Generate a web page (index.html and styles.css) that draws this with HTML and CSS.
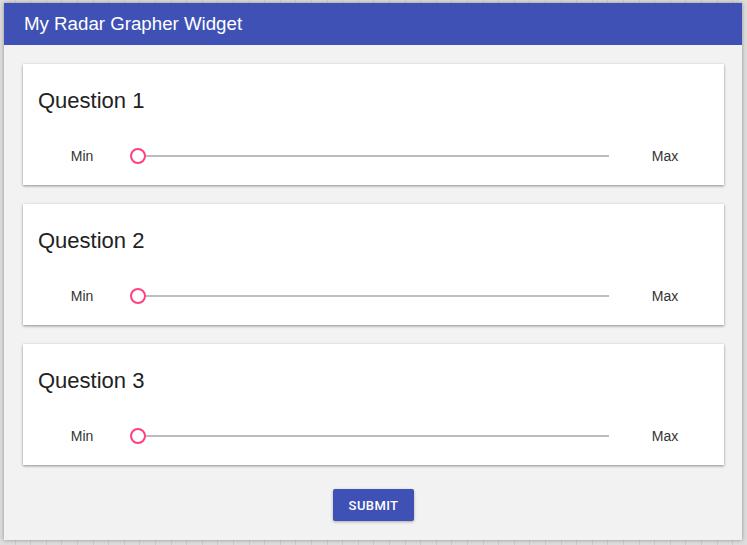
FILE: index.html
```html
<!DOCTYPE html>
<html>
<head>
<meta charset="utf-8">
<link rel="stylesheet" href="styles.css">
</head>
<body>
<div class="window">
  <header class="appbar">My Radar Grapher Widget</header>
  <main class="content">
    <section class="card">
      <h2 class="title">Question 1</h2>
      <div class="row">
        <span class="label">Min</span>
        <div class="slider"><div class="track"></div><div class="thumb"></div></div>
        <span class="label">Max</span>
      </div>
    </section>
    <section class="card">
      <h2 class="title">Question 2</h2>
      <div class="row">
        <span class="label">Min</span>
        <div class="slider"><div class="track"></div><div class="thumb"></div></div>
        <span class="label">Max</span>
      </div>
    </section>
    <section class="card">
      <h2 class="title">Question 3</h2>
      <div class="row">
        <span class="label">Min</span>
        <div class="slider"><div class="track"></div><div class="thumb"></div></div>
        <span class="label">Max</span>
      </div>
    </section>
    <div class="actions"><button class="submit">SUBMIT</button></div>
  </main>
</div>
</body>
</html>
```
FILE: styles.css
```css
html, body { margin: 0; padding: 0; }
body {
  width: 747px;
  height: 545px;
  overflow: hidden;
  font-family: "Liberation Sans", Arial, sans-serif;
  background-color: #dddddd;
  background-image: repeating-linear-gradient(90deg, transparent 0, transparent 14.6px, #cdcdcd 14.6px, #cdcdcd 15.6px);
  padding: 3px 0 0 4px;
  box-sizing: border-box;
}
.window {
  width: 738px;
  height: 537px;
  background: #f2f2f2;
  box-shadow: 0 0 4px rgba(0,0,0,0.35);
  display: flex;
  flex-direction: column;
}
.appbar {
  height: 42px;
  background: #3f51b5;
  color: #ffffff;
  font-size: 18.7px;
  line-height: 42px;
  padding-left: 20px;
  flex: none;
}
.content {
  padding: 19px 18px 0 19px;
  display: flex;
  flex-direction: column;
  gap: 19px;
}
.card {
  background: #ffffff;
  height: 121px;
  box-sizing: border-box;
  padding: 0 15px;
  box-shadow: 0 1px 3px rgba(0,0,0,0.25), 0 1px 2px rgba(0,0,0,0.2);
  display: flex;
  flex-direction: column;
}
.title {
  margin: 0;
  padding-top: 24px;
  font-size: 22px;
  font-weight: normal;
  line-height: 25px;
  color: #222222;
}
.row {
  margin-top: 31px;
  height: 24px;
  display: flex;
  align-items: center;
}
.label {
  width: 88px;
  text-align: center;
  font-size: 14px;
  color: #333333;
  flex: none;
}
.slider {
  flex: 1;
  height: 24px;
  position: relative;
}
.track {
  position: absolute;
  left: 20px;
  right: 12px;
  top: 11px;
  height: 2px;
  background: #bdbdbd;
}
.thumb {
  position: absolute;
  left: 4px;
  top: 4px;
  width: 12px;
  height: 12px;
  border: 2px solid #ff4081;
  border-radius: 50%;
  background: #ffffff;
}
.actions {
  display: flex;
  justify-content: center;
  margin-top: 5px;
}
.submit {
  width: 81px;
  height: 32px;
  border: none;
  border-radius: 2px;
  background: #3f51b5;
  color: #ffffff;
  font-family: Roboto, "Liberation Sans", Arial, sans-serif;
  font-weight: 500;
  font-size: 13px;
  letter-spacing: 0.4px;
  box-shadow: 0 1px 3px rgba(0,0,0,0.3);
  padding: 0;
}
```
